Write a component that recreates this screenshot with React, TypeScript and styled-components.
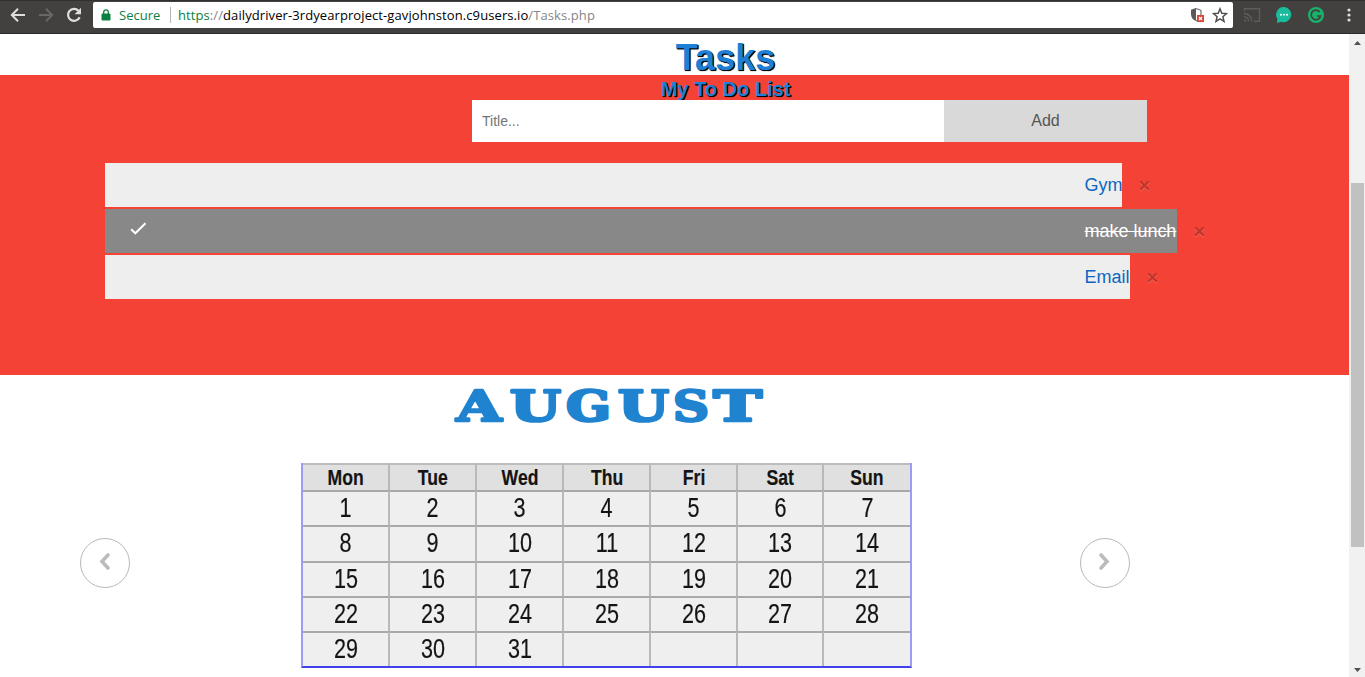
import React from "react";
import styled, { createGlobalStyle } from "styled-components";

const GlobalStyle = createGlobalStyle`
  * { box-sizing: border-box; }
  html, body { margin: 0; padding: 0; overflow: hidden; background: #fff; }
  body { font-family: "Liberation Sans", Arial, sans-serif; }
`;

const Browser = styled.div`
  width: 1365px;
  height: 677px;
  display: flex;
  flex-direction: column;
  overflow: hidden;
`;

const Toolbar = styled.header`
  flex: none;
  height: 34px;
  display: flex;
  align-items: flex-start;
  background: #434140;
  border-top: 1px solid #323030;
  border-bottom: 1px solid #2b292a;
`;

const NavButtons = styled.div`
  width: 93px;
  height: 28px;
  padding-left: 9px;
  display: flex;
  align-items: center;
  gap: 10px;
  svg { display: block; }
`;

const AddressBar = styled.div`
  width: 1140px;
  height: 26px;
  margin-top: 1px;
  padding: 0 5px 0 8px;
  display: flex;
  align-items: center;
  background: #fff;
  border-radius: 2px;
  font: 13px/26px "Open Sans", "Noto Sans", sans-serif;
  white-space: nowrap;
  svg { display: block; flex: none; }
`;

const Secure = styled.span`
  width: 51px;
  margin-left: 8px;
  color: #0b8043;
`;

const Url = styled.span`
  flex: 1;
  height: 16px;
  line-height: 16px;
  padding-left: 7px;
  border-left: 1px solid #b4b4b4;
  letter-spacing: 0.09px;
  color: #868686;
`;

const Scheme = styled.span`color: #0b8043;`;
const Host = styled.span`color: #000;`;

const BarIcons = styled.div`
  display: flex;
  align-items: center;
  gap: 7px;
`;

const Extensions = styled.div`
  height: 28px;
  padding-left: 10px;
  display: flex;
  align-items: center;
  svg { display: block; }
`;

const Spaced = styled.svg<{ $gap: number }>`
  margin-left: ${(p) => p.$gap}px;
`;

const Viewport = styled.div`
  flex: 1;
  min-height: 0;
  display: flex;
`;

const Page = styled.main`
  width: 1349px;
  overflow: hidden;
`;

const shadow = "text-shadow: 1px 1px 0 #000, 1px 1px 1px #000; color: #1e7fd6; font-weight: bold; margin: 0; text-align: center;";

const Title = styled.h1`
  ${shadow}
  height: 41px;
  padding-left: 102px;
  font-size: 36px;
  line-height: 47px;
`;

const TodoPanel = styled.section`
  height: 300px;
  background: #f44336;
`;

const Subtitle = styled.h2`
  ${shadow}
  height: 25px;
  padding-left: 102px;
  font-size: 20px;
  line-height: 29px;
  overflow: hidden;
`;

const AddForm = styled.form`
  display: flex;
  width: 675px;
  height: 42px;
  margin-left: 472px;
`;

const TitleInput = styled.input`
  width: 472px;
  border: 0;
  padding: 0 10px;
  background: #fff;
  font: 14px "Liberation Sans", Arial, sans-serif;
  &::placeholder { color: #757575; opacity: 1; }
`;

const AddButton = styled.button`
  flex: 1;
  border: 0;
  padding: 0;
  background: #d9d9d9;
  color: #555;
  font: 16px "Liberation Sans", Arial, sans-serif;
`;

const TaskList = styled.ul`
  list-style: none;
  margin: 21px 0 0 105px;
  padding: 0;
  display: flex;
  flex-direction: column;
  gap: 2px;
`;

const TaskRow = styled.li`
  display: flex;
  height: 44px;
`;

const TaskBox = styled.div<{ $done: boolean; $width: number }>`
  width: ${(p) => p.$width}px;
  display: flex;
  align-items: center;
  background: ${(p) => (p.$done ? "#888" : "#eee")};
  color: ${(p) => (p.$done ? "#fff" : "#0b67c1")};
  text-decoration: ${(p) => (p.$done ? "line-through" : "none")};
  font-size: 18px;
  letter-spacing: -0.03px;
  white-space: nowrap;
`;

const TaskMark = styled.span`
  width: 979.6px;
  flex: none;
  padding: 0 0 4px 25px;
  svg { display: block; }
`;

const Remove = styled.span`
  display: flex;
  align-items: center;
  padding-top: 1px;
  margin-left: 15.5px;
`;

const CalendarSection = styled.section`
  display: flex;
  flex-direction: column;
`;

const Banner = styled.div`
  height: 88px;
  padding-left: 445px;
  svg { display: block; }
`;

const Carousel = styled.div`
  display: flex;
  align-items: flex-start;
  padding-left: 80px;
`;

const Arrow = styled.button`
  width: 50px;
  height: 50px;
  flex: none;
  margin-top: 75px;
  padding: 0 0 2px;
  display: flex;
  align-items: center;
  justify-content: center;
  border: 1px solid #b8b8b8;
  border-radius: 50%;
  background: #fff;
`;

const Calendar = styled.div`
  width: 611px;
  height: 205px;
  margin: 0 168px 0 171px;
  display: grid;
  grid-template-columns: 87px repeat(5, 86.9px) 1fr;
  grid-template-rows: 27px repeat(4, 35.3px) 1fr;
  border: solid #9c9cf4;
  border-width: 0 2px 2px;
  border-bottom-color: #4040ee;
  filter: blur(0.4px);
`;

const Cell = styled.div<{ $head?: boolean; $last: boolean }>`
  display: flex;
  align-items: center;
  justify-content: center;
  padding: 0 0 ${(p) => (p.$head ? "1px" : "0")} ${(p) => (p.$last ? "0" : "1px")};
  background: ${(p) => (p.$head ? "#e0e0e0" : "#efefef")};
  border-top: 2px solid ${(p) => (p.$head ? "#bcbcbc" : "#a9a9a9")};
  border-right: ${(p) => (p.$last ? "0" : "2px solid #b9b9b9")};
  color: #141414;
  font-size: ${(p) => (p.$head ? "22px" : "27px")};
  font-weight: ${(p) => (p.$head ? "bold" : "normal")};
  line-height: 25px;
  -webkit-text-stroke: 0.2px #141414;
`;

const Narrow = styled.span`
  transform: scaleX(0.8);
`;

const Scrollbar = styled.aside`
  width: 16px;
  background: #f1f1f1;
  padding: 7px 1px 5px 2px;
  display: flex;
  flex-direction: column;
  align-items: center;
  svg { display: block; flex: none; }
`;

const Thumb = styled.div`
  width: 13px;
  height: 364px;
  margin: 138px 0 auto;
  background: #c1c1c1;
`;

const tasks = [
  { text: "Gym", width: 1017, done: false },
  { text: "make lunch", width: 1072, done: true },
  { text: "Email", width: 1025, done: false },
];

const days = ["Mon", "Tue", "Wed", "Thu", "Fri", "Sat", "Sun"];
const dates = Array.from({ length: 35 }, (_, i) => (i < 31 ? String(i + 1) : ""));

const letters = [
  { ch: "A", x: 11.5, w: 45 },
  { ch: "U", x: 65, w: 51 },
  { ch: "G", x: 121, w: 45 },
  { ch: "U", x: 173, w: 51 },
  { ch: "S", x: 228, w: 36 },
  { ch: "T", x: 268.5, w: 48.5 },
];

const Chevron = ({ d }: { d: string }) => (
  <svg width="14" height="20" viewBox="0 0 14 20" fill="none" stroke="#bcbcbc" strokeWidth="3.6" strokeLinecap="round">
    <path d={d} />
  </svg>
);

export default function App() {
  return (
    <Browser>
      <GlobalStyle />
      <Toolbar>
        <NavButtons>
          <svg width="18" height="18" viewBox="0 0 18 18" fill="none" stroke="#dedede" strokeWidth="2">
            <path d="M16 9H3M9 2.8L2.8 9L9 15.2" />
          </svg>
          <svg width="18" height="18" viewBox="0 0 18 18" fill="none" stroke="#696766" strokeWidth="2">
            <path d="M2 9h13M9 2.8L15.2 9L9 15.2" />
          </svg>
          <svg width="18" height="18" viewBox="0 0 18 18" fill="none" stroke="#dedede" strokeWidth="2.2">
            <path d="M14.6 11.2A6 6 0 1 1 13.5 4.8" />
            <path d="M16 1.8v6.4H9.6z" fill="#dedede" stroke="none" />
          </svg>
        </NavButtons>
        <AddressBar>
          <svg width="10" height="12" viewBox="0 0 10 12">
            <path d="M1 5h8v6H1z" fill="#0b8043" stroke="#0b8043" strokeLinejoin="round" />
            <path d="M2.7 5V3.2a2.3 2.3 0 0 1 4.6 0V5" fill="none" stroke="#0b8043" strokeWidth="1.3" />
          </svg>
          <Secure>Secure</Secure>
          <Url>
            <Scheme>https</Scheme>://<Host>dailydriver-3rdyearproject-gavjohnston.c9users.io</Host>/Tasks.php
          </Url>
          <BarIcons>
            <svg width="15" height="16" viewBox="0 0 15 16">
              <path d="M6 1L1 2.8V7c0 3.4 2 6 5 7z" fill="#5a5a5a" />
              <path d="M6 1.5l5 1.8V7c0 3.4-2 6-5 7" fill="#fff" stroke="#6a6a6a" strokeWidth="1.2" />
              <path d="M7 8h7v7H7z" fill="#db4437" />
              <path d="M9 10l3 3m0-3l-3 3" stroke="#fff" strokeWidth="1.2" />
            </svg>
            <svg width="16" height="16" viewBox="0 0 16 16" fill="none" stroke="#505050" strokeWidth="1.5">
              <path d="M8 1.8l1.8 4.4 4.7.4-3.6 3.1 1.1 4.6L8 11.8l-4 2.5 1.1-4.6-3.6-3.1 4.7-.4z" />
            </svg>
          </BarIcons>
        </AddressBar>
        <Extensions>
          <svg width="18" height="16" viewBox="0 0 18 16" fill="none" stroke="#5e5c5b" strokeWidth="1.4">
            <path d="M1.5 4V1.7h15v12.6H11M1 6.5a7.8 7.8 0 0 1 7.8 7.8M1 9.7a4.6 4.6 0 0 1 4.6 4.6" />
            <path d="M1 12.5a2 2 0 0 1 2 2H1z" fill="#5e5c5b" stroke="none" />
          </svg>
          <Spaced $gap={15} width="16" height="16" viewBox="0 0 16 16">
            <path d="M8 0a7.6 7.6 0 1 1-3 14.7L1 16l.4-4.2A7.6 7.6 0 0 1 8 0z" fill="#19bc9c" />
            <g fill="#fff"><circle cx="5" cy="7.7" r="1" /><circle cx="8" cy="7.7" r="1" /><circle cx="11" cy="7.7" r="1" /></g>
          </Spaced>
          <Spaced $gap={16} width="16" height="16" viewBox="0 0 16 16">
            <circle cx="8" cy="8" r="8" fill="#18b26b" />
            <path d="M11.7 4.9A4.8 4.8 0 1 0 12.6 9H9M12.6 9l-1.3 3" fill="none" stroke="#434140" strokeWidth="1.7" />
          </Spaced>
          <Spaced $gap={22.5} width="4" height="14" viewBox="0 0 4 14" fill="#dedede">
            <circle cx="2" cy="2" r="1.6" /><circle cx="2" cy="7" r="1.6" /><circle cx="2" cy="12" r="1.6" />
          </Spaced>
        </Extensions>
      </Toolbar>
      <Viewport>
        <Page>
          <Title>Tasks</Title>
          <TodoPanel>
            <Subtitle>My To Do List</Subtitle>
            <AddForm>
              <TitleInput placeholder="Title..." />
              <AddButton type="button">Add</AddButton>
            </AddForm>
            <TaskList>
              {tasks.map((t) => (
                <TaskRow key={t.text}>
                  <TaskBox $done={t.done} $width={t.width}>
                    <TaskMark>
                      {t.done && (
                        <svg width="17" height="14" viewBox="0 0 17 14" fill="none" stroke="#fff" strokeWidth="2">
                          <path d="M1.2 7.2L5.3 11.3L15.5 1.2" />
                        </svg>
                      )}
                    </TaskMark>
                    {t.text}
                  </TaskBox>
                  <Remove>
                    <svg width="13" height="13" viewBox="0 0 13 13" fill="none" strokeWidth="2.3">
                      <path d="M2.2 3.2l8.6 8.6m0-8.6l-8.6 8.6" stroke="#f8675b" />
                      <path d="M2.2 2.2l8.6 8.6m0-8.6l-8.6 8.6" stroke="#be372c" />
                    </svg>
                  </Remove>
                </TaskRow>
              ))}
            </TaskList>
          </TodoPanel>
          <CalendarSection>
            <Banner>
              <svg width="330" height="60" viewBox="0 0 330 60" fill="#1f83d0" stroke="#1f83d0" strokeWidth="2.6" strokeLinejoin="round"
                fontFamily="'DejaVu Serif', serif" fontWeight="bold" fontSize="42">
                {letters.map((l, i) => (
                  <text key={i} x={l.x} y="45.5" textLength={l.w} lengthAdjust="spacingAndGlyphs">{l.ch}</text>
                ))}
              </svg>
            </Banner>
            <Carousel>
              <Arrow><Chevron d="M10 3L4 9.5L10 16" /></Arrow>
              <Calendar>
                {days.map((d, i) => (
                  <Cell key={d} $head $last={i === 6}><Narrow>{d}</Narrow></Cell>
                ))}
                {dates.map((d, i) => (
                  <Cell key={i} $last={i % 7 === 6}><Narrow>{d}</Narrow></Cell>
                ))}
              </Calendar>
              <Arrow><Chevron d="M3 3L9 9.5L3 16" /></Arrow>
            </Carousel>
          </CalendarSection>
        </Page>
        <Scrollbar>
          <svg width="7" height="4" viewBox="0 0 7 4"><path d="M3.5 0L7 4H0z" fill="#505050" /></svg>
          <Thumb />
          <svg width="7" height="4" viewBox="0 0 7 4"><path d="M0 0h7L3.5 4z" fill="#505050" /></svg>
        </Scrollbar>
      </Viewport>
    </Browser>
  );
}
